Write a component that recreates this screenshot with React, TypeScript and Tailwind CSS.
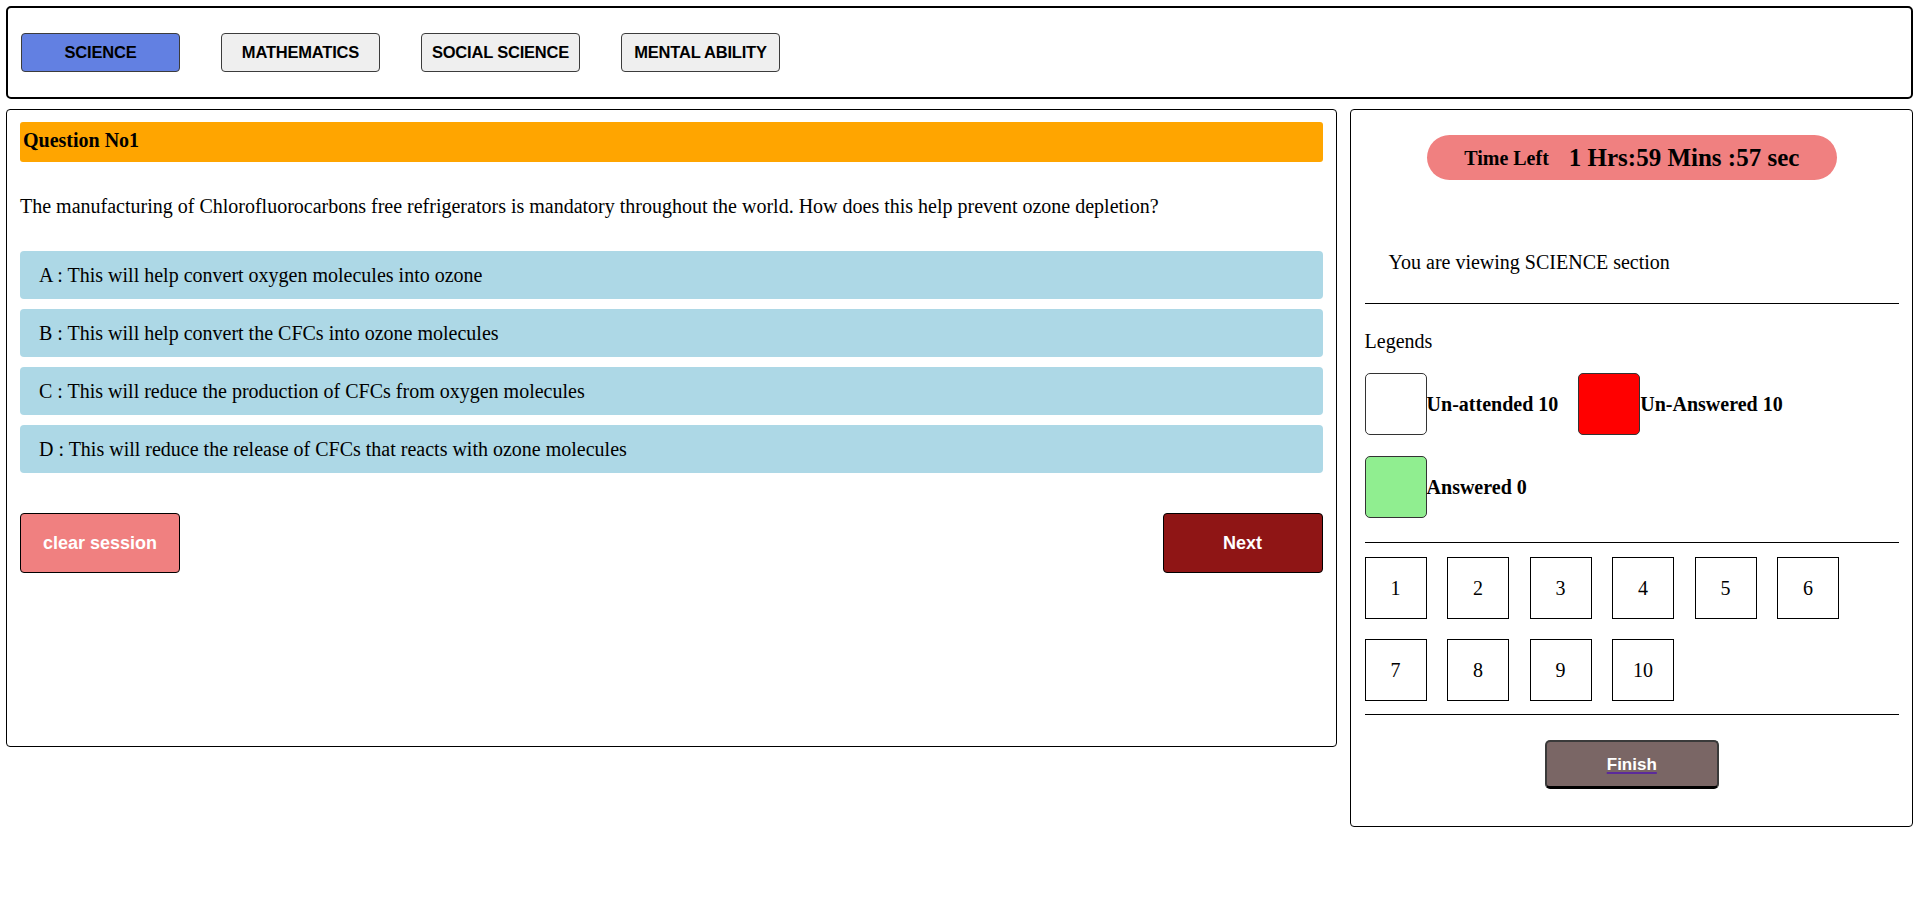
import React from "react";

const serif = { fontFamily: '"Liberation Serif", "Times New Roman", serif' };

export default function App() {
  const subjects = ["SCIENCE", "MATHEMATICS", "SOCIAL SCIENCE", "MENTAL ABILITY"];
  const options = [
    "A : This will help convert oxygen molecules into ozone",
    "B : This will help convert the CFCs into ozone molecules",
    "C : This will reduce the production of CFCs from oxygen molecules",
    "D : This will reduce the release of CFCs that reacts with ozone molecules",
  ];
  const nums = [1, 2, 3, 4, 5, 6, 7, 8, 9, 10];
  return (
    <div className="w-[1919px] h-[897px] bg-white p-[6px] text-black font-['Liberation_Serif',serif]" style={serif}>
      {/* Top subject bar */}
      <div className="h-[93px] border-2 border-black rounded-[5px] flex items-center pl-[13px] gap-[41px]">
        {subjects.map((s, i) => (
          <button
            key={s}
            className={`w-[159px] h-[39px] rounded-[4px] border-[1.5px] border-[#3c3c3c] text-[16.5px] font-bold tracking-[-0.2px] font-['Liberation_Sans',Arial,sans-serif] ${
              i === 0 ? "bg-[#6280e2]" : "bg-[#efefef]"
            }`}
          >
            {s}
          </button>
        ))}
      </div>

      <div className="flex items-start gap-[13px] mt-[10px]">
        {/* Question panel */}
        <div className="w-[1332px] h-[638px] border border-black rounded-[4px] px-[13px] pt-[12px]">
          <div className="h-[40px] bg-[#ffa500] rounded-[3px] flex items-center pl-[3px] pb-[5px] text-[20px] font-bold">
            Question No1
          </div>
          <p className="text-[20px] leading-[22px] mt-[33px] mb-[34px]">
            The manufacturing of Chlorofluorocarbons free refrigerators is mandatory throughout the world. How does this help prevent ozone depletion?
          </p>
          <div className="flex flex-col gap-[10px]">
            {options.map((o) => (
              <div key={o} className="h-[48px] bg-[#add8e6] rounded-[4px] flex items-center pl-[19px] pb-[1px] text-[20px]">
                {o}
              </div>
            ))}
          </div>
          <div className="flex justify-between mt-[40px]">
            <button className="w-[160px] h-[60px] bg-[#f08080] border border-black rounded-[4px] text-white font-bold text-[18px] font-['Liberation_Sans',Arial,sans-serif]">
              clear session
            </button>
            <button className="w-[160px] h-[60px] bg-[#8f1515] border border-black rounded-[4px] text-white font-bold text-[18px] font-['Liberation_Sans',Arial,sans-serif]">
              Next
            </button>
          </div>
        </div>

        {/* Side panel */}
        <div className="w-[564px] h-[718px] border border-black rounded-[4px] px-[14px] pt-[25px] pr-[13px]">
          <div className="flex justify-center">
            <div className="w-[410px] h-[45px] rounded-full bg-[#f08080] flex items-center justify-center gap-[20px] font-bold">
              <span className="text-[20px]">Time Left</span>
              <span className="text-[25px]">1 Hrs:59 Mins :57 sec</span>
            </div>
          </div>
          <div className="text-[20px] leading-[23px] mt-[71px] pl-[24px]">You are viewing SCIENCE section</div>
          <div className="h-px bg-black mt-[29px]" />
          <div className="text-[20px] leading-[23px] mt-[26px]">Legends</div>
          <div className="flex flex-wrap items-center gap-y-[21px] mt-[20px] font-bold text-[20px]">
            <div className="flex items-center mr-[20px]">
              <div className="w-[62px] h-[62px] rounded-[5px] border border-[#333] bg-white" />
              <span>Un-attended 10</span>
            </div>
            <div className="flex items-center">
              <div className="w-[62px] h-[62px] rounded-[5px] border border-[#333] bg-[#ff0000]" />
              <span>Un-Answered 10</span>
            </div>
            <div className="flex items-center basis-full">
              <div className="w-[62px] h-[62px] rounded-[5px] border border-[#333] bg-[#90ee90]" />
              <span>Answered 0</span>
            </div>
          </div>
          <div className="h-px bg-black mt-[24px]" />
          <div className="grid grid-cols-[repeat(6,62px)] gap-x-[20.5px] gap-y-[20px] mt-[14px]">
            {nums.map((n) => (
              <div key={n} className="w-[62px] h-[62px] border border-black flex items-center justify-center text-[20px]">
                {n}
              </div>
            ))}
          </div>
          <div className="h-px bg-black mt-[13px]" />
          <div className="flex justify-center mt-[25px]">
            <button className="w-[174px] h-[49px] pt-[2px] bg-[#7a6665] border-2 border-[#3a3a3a] border-b-[3px] border-b-black rounded-[5px] text-white font-bold text-[17px] font-['Liberation_Sans',Arial,sans-serif]">
              <span className="underline decoration-[#5b2a9b] decoration-[1.5px] underline-offset-[2px]">Finish</span>
            </button>
          </div>
        </div>
      </div>
    </div>
  );
}
